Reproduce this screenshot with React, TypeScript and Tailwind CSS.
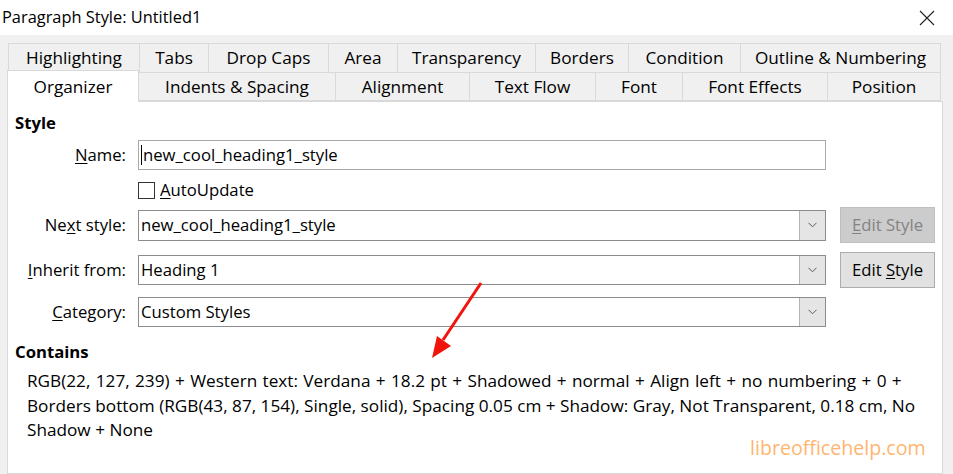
import React from 'react';

const row1 = [
  { label: 'Highlighting', w: 'w-[131px]' },
  { label: 'Tabs', w: 'w-[69px]' },
  { label: 'Drop Caps', w: 'w-[120px]' },
  { label: 'Area', w: 'w-[69px]' },
  { label: 'Transparency', w: 'w-[138px]' },
  { label: 'Borders', w: 'w-[93px]' },
  { label: 'Condition', w: 'w-[112px]' },
  { label: 'Outline & Numbering', w: 'w-[201px]' },
];

const row2 = [
  { label: 'Indents & Spacing', w: 'w-[197px]' },
  { label: 'Alignment', w: 'w-[134px]' },
  { label: 'Text Flow', w: 'w-[126px]' },
  { label: 'Font', w: 'w-[87px]' },
  { label: 'Font Effects', w: 'w-[145px]' },
  { label: 'Position', w: 'w-[113px]' },
];

const Chevron = () => (
  <svg width="9" height="6" viewBox="0 0 9 6" fill="none">
    <path d="M0.5 0.8 L4.5 4.8 L8.5 0.8" stroke="#5a5a5a" strokeWidth="1" />
  </svg>
);

const Combo = ({ value }: { value: string }) => (
  <div className="flex h-full w-[688px] border border-[#8c8c8c] bg-white">
    <div className="flex flex-1 items-center pl-[2px]">{value}</div>
    <div className="flex w-[26px] items-center justify-center border-l border-[#b4b4b4] bg-[#e5e5e5]">
      <Chevron />
    </div>
  </div>
);

const Label = ({ children }: { children: React.ReactNode }) => (
  <div className="w-[111px] shrink-0 whitespace-nowrap text-right">{children}</div>
);

export default function App() {
  return (
    <div
      className="relative h-[474px] w-[953px] overflow-hidden bg-[#f0f0f0] text-[16.7px] text-black"
      style={{ fontFamily: '"Open Sans", "Noto Sans", sans-serif' }}
    >
      {/* title bar */}
      <div className="flex h-[35px] items-center justify-between bg-white pl-[2px] pr-[18px] text-[16.4px]">
        <span>Paragraph Style: Untitled1</span>
        <svg width="16" height="16" viewBox="0 0 16 16">
          <path d="M1 1 L15 15 M15 1 L1 15" stroke="#222" strokeWidth="1.1" />
        </svg>
      </div>

      {/* tabs */}
      <div className="pt-[8px] text-[17.2px]">
        <div className="ml-[8px] flex h-[29px]">
          {row1.map(t => (
            <div
              key={t.label}
              className={`${t.w} flex items-center justify-center whitespace-nowrap border-l border-t border-[#d9d9d9] last:border-r`}
            >
              {t.label}
            </div>
          ))}
        </div>
        <div className="ml-[7px] flex h-[29px] items-end">
          <div className="relative z-10 -mb-px flex h-[32px] w-[132px] items-center justify-center border-l border-r border-t border-[#d9d9d9] bg-white">
            Organizer
          </div>
          {row2.map(t => (
            <div
              key={t.label}
              className={`${t.w} flex h-[29px] items-center justify-center whitespace-nowrap border-b border-t border-r border-[#d9d9d9]`}
            >
              {t.label}
            </div>
          ))}
        </div>
      </div>

      {/* panel */}
      <div className="ml-[7px] h-[373px] w-[936px] border border-[#d9d9d9] bg-white pl-[7px]">
        <div className="mt-[10px] h-[22px] font-bold leading-[22px]">Style</div>

        <div className="mt-[6px] flex h-[30px] items-center gap-[12px]">
          <Label>
            <span className="underline underline-offset-2">N</span>ame:
          </Label>
          <div className="relative flex h-full w-[688px] items-center border border-[#a8a8a8] bg-white pl-[2px]">
            <span className="mr-px inline-block h-[20px] w-px bg-black" />
            new_cool_heading1_style
          </div>
        </div>

        <div className="mt-[10px] flex h-[20px] items-center gap-[5px] pl-[123px]">
          <div className="h-[17px] w-[17px] border border-[#333] bg-white" />
          <span>
            <span className="underline underline-offset-2">A</span>utoUpdate
          </span>
        </div>

        <div className="mt-[7px] flex h-[36px] items-center gap-[12px]">
          <Label>
            Ne<span className="underline underline-offset-2">x</span>t style:
          </Label>
          <div className="h-[31px]">
            <Combo value="new_cool_heading1_style" />
          </div>
          <div className="ml-[2px] flex h-[36px] w-[95px] items-center justify-center whitespace-nowrap border border-[#bfbfbf] bg-[#cccccc] text-[#838383]">
            <span>
              <span className="underline underline-offset-2">E</span>dit Style
            </span>
          </div>
        </div>

        <div className="mt-[9px] flex h-[36px] items-center gap-[12px]">
          <Label>
            <span className="underline underline-offset-2">I</span>nherit from:
          </Label>
          <div className="h-[30px]">
            <Combo value="Heading 1" />
          </div>
          <div className="ml-[2px] flex h-[36px] w-[95px] items-center justify-center whitespace-nowrap border border-[#adadad] bg-[#e1e1e1]">
            <span>
              Edit <span className="underline underline-offset-2">S</span>tyle
            </span>
          </div>
        </div>

        <div className="mt-[9px] flex h-[30px] items-center gap-[12px]">
          <Label>
            <span className="underline underline-offset-2">C</span>ategory:
          </Label>
          <div className="h-[30px]">
            <Combo value="Custom Styles" />
          </div>
        </div>

        <div className="mt-[14px] h-[22px] font-bold leading-[22px]">Contains</div>

        <div className="mt-[6px] whitespace-nowrap pl-[12px] text-[17.2px] leading-[24.5px]">
          <span className="[word-spacing:0.9px]">
            RGB(22, 127, 239) + Western text: Verdana + 18.2 pt + Shadowed + normal + Align left + no numbering + 0 +
          </span>
          <br />
          Borders bottom (RGB(43, 87, 154), Single, solid), Spacing 0.05 cm + Shadow: Gray, Not Transparent, 0.18 cm, No
          <br />
          Shadow + None
        </div>
      </div>

      {/* watermark */}
      <div className="absolute left-[750px] top-[433px] text-[19.6px] text-[#ffb570]">libreofficehelp.com</div>

      {/* red annotation arrow */}
      <svg className="absolute left-0 top-0" width="953" height="474" viewBox="0 0 953 474">
        <line x1="481" y1="283" x2="443" y2="340" stroke="#f0140c" strokeWidth="3" />
        <polygon points="432,358 437,336 451,346" fill="#f0140c" />
      </svg>
    </div>
  );
}
